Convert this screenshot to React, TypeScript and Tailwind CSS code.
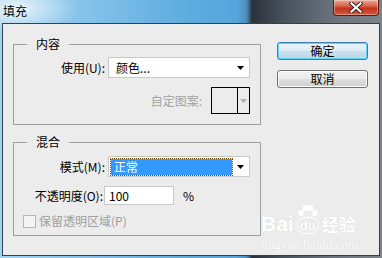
import React from 'react';

const cjk = "font-['Noto_Sans_CJK_SC','Noto_Sans',sans-serif]";

const Arrow: React.FC<{ color?: string }> = ({ color = '#000' }) => (
  <svg width="7" height="4" viewBox="0 0 7 4">
    <path d="M0 0H7L3.5 4Z" fill={color} />
  </svg>
);

const Select: React.FC<{ value: string; selected?: boolean }> = ({ value, selected }) => (
  <div className="w-[142px] h-[21px] bg-white border border-[#c9c9c9] flex items-center">
    {selected ? (
      <div className="ml-[2px] w-[121px] h-[16px] bg-[#3399ff] outline-1 outline-dotted outline-[#7a4a00] flex items-center pl-[3px] text-white">
        {value}
      </div>
    ) : (
      <div className="pl-[7px] w-[123px]">{value}</div>
    )}
    <div className="ml-auto mr-[5px] flex items-center">
      <Arrow />
    </div>
  </div>
);

const Button: React.FC<{ label: string; primary?: boolean }> = ({ label, primary }) => (
  <div
    className={`w-[91px] h-[18px] rounded-[3px] border flex items-center justify-center leading-none ${
      primary
        ? 'border-[#3c7fb1] bg-[linear-gradient(#eaf5fc_0%,#dcecf7_48%,#c9e0ee_52%,#bdd6e6_100%)] shadow-[inset_0_0_0_1px_#5fd2f5]'
        : 'border-[#707070] bg-[linear-gradient(#f2f2f2_0%,#ebebeb_48%,#dddddd_52%,#cfcfcf_100%)] shadow-[inset_0_0_0_1px_#fcfcfc]'
    }`}
  >
    {label}
  </div>
);

export default function App() {
  return (
    <div
      className={`${cjk} text-[12px] leading-[14px] text-black w-[382px] h-[258px] overflow-hidden flex flex-col bg-[radial-gradient(ellipse_60px_26px_at_18px_8px,rgba(255,255,255,0.75),rgba(255,255,255,0)),linear-gradient(90deg,#a3d3ef_0%,#86c3e9_22%,#62afe0_45%,#55a6dc_62%,#4f8fbb_64.5%,#2a323b_66%,#46505a_74%,#68717a_86%,#7c848a_100%)]`}
    >
      {/* title bar */}
      <div className="h-[23px] flex items-start shrink-0">
        <span className="pl-[3px] pt-[4px] text-[12px] [text-shadow:0_0_6px_rgba(255,255,255,0.9)]">填充</span>
        <div className="ml-auto mr-[3px] w-[46px] h-[16px] rounded-b-[4px] border border-t-0 border-[#5a1a10] bg-[linear-gradient(#e9a898_0%,#d9654c_40%,#c2351c_55%,#d4553a_100%)] shadow-[inset_0_0_0_1px_rgba(255,255,255,0.35)] flex items-center justify-center">
          <svg width="14" height="11" viewBox="0 0 14 11">
            <path d="M2.5 1.5L11.5 9.5M11.5 1.5L2.5 9.5" stroke="#3a1a14" strokeWidth="4" strokeLinecap="square" />
            <path d="M2.5 1.5L11.5 9.5M11.5 1.5L2.5 9.5" stroke="#ffffff" strokeWidth="2.2" strokeLinecap="square" />
          </svg>
        </div>
      </div>

      {/* client area */}
      <div className="relative ml-[2px] mr-[2px] h-[233px] shrink-0 border border-[#34404c] bg-[#ececec] flex pl-[10px] pt-[13px]">
        <div className="w-[248px] flex flex-col">
          <fieldset className="h-[88px] border border-[#a0a0a0]">
            <legend className="ml-[13px] px-[9px]">内容</legend>
            <div className="pr-[10px] pt-[6px] flex flex-col">
              <div className="flex items-center justify-end gap-[3px]">
                <span>使用(U):</span>
                <Select value="颜色..." />
              </div>
              <div className="mt-[9px] flex items-center justify-end">
                <span className="text-[#a3a3a3] mr-[9px] mt-[1px]">自定图案:</span>
                <div className="w-[39px] h-[27px] border border-black flex">
                  <div className="w-[26px] border-r border-black" />
                  <div className="flex-1 flex items-center justify-center">
                    <Arrow color="#b0b0b0" />
                  </div>
                </div>
              </div>
            </div>
          </fieldset>

          <fieldset className="mt-[10px] h-[101px] border border-[#a0a0a0]">
            <legend className="ml-[13px] px-[9px]">混合</legend>
            <div className="pr-[10px] pt-[7px] flex flex-col">
              <div className="flex items-center justify-end gap-[3px]">
                <span>模式(M):</span>
                <Select value="正常" selected />
              </div>
              <div className="mt-[9px] flex items-center">
                <span className="w-[89px] text-right">不透明度(O):</span>
                <div className="ml-[1px] w-[70px] h-[19px] bg-white border border-[#c9c9c9] flex items-center pl-[4px]">100</div>
                <span className="ml-[9px]">%</span>
              </div>
              <div className="mt-[9px] ml-[9px] flex items-center gap-[3px] text-[#a0a0a0]">
                <div className="w-[13px] h-[13px] border border-[#b5b5b5] bg-[#f4f4f4]" />
                <span>保留透明区域(P)</span>
              </div>
            </div>
          </fieldset>
        </div>

        <div className="ml-[16px] pt-[5px] flex flex-col gap-[10px]">
          <Button label="确定" primary />
          <Button label="取消" />
        </div>

        {/* watermark */}
        <div className="absolute left-[258px] top-[180px] flex flex-col items-start text-white pointer-events-none [text-shadow:0_0_1px_#cfcfcf]">
          <div className="flex items-end">
            <span className="font-['Liberation_Sans',sans-serif] font-bold text-[21px] leading-[21px]">Bai</span>
            <div className="relative mx-[2px] w-[24px] h-[30px] flex items-end justify-center">
              <svg className="absolute top-0 left-[1px]" width="22" height="14" viewBox="0 0 22 14">
                <ellipse cx="4" cy="9" rx="2.6" ry="3" fill="#fff" />
                <ellipse cx="8.5" cy="4" rx="2.6" ry="3" fill="#fff" />
                <ellipse cx="13.5" cy="4" rx="2.6" ry="3" fill="#fff" />
                <ellipse cx="18" cy="9" rx="2.6" ry="3" fill="#fff" />
              </svg>
              <div className="w-[22px] h-[17px] rounded-[9px] border border-white flex items-center justify-center font-['Liberation_Sans',sans-serif] font-bold text-[13px] leading-none">
                du
              </div>
            </div>
            <span className="font-bold text-[17px] leading-[21px]">经验</span>
          </div>
          <span className="mt-[4px] font-['Liberation_Serif',serif] text-[13px] leading-[14px]">jingyan.baidu.com</span>
        </div>
      </div>
    </div>
  );
}
